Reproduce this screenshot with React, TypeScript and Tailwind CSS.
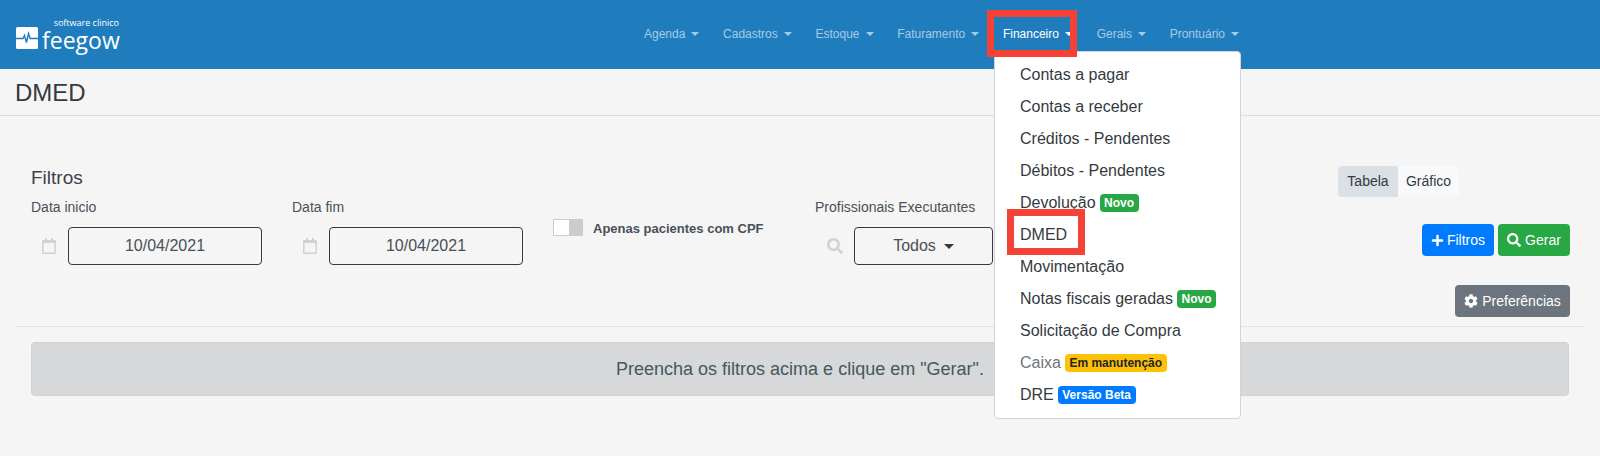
import { FaCog, FaPlus, FaRegCalendar, FaSearch } from "react-icons/fa";

const navItems = ["Agenda", "Cadastros", "Estoque", "Faturamento", "Financeiro", "Gerais", "Prontuário"];

const Caret = ({ className }: { className: string }) => (
  <span className={`inline-block border-x-transparent ${className}`} />
);

const Logo = () => (
  <div className="flex items-end">
    <svg width="22" height="22" viewBox="0 0 22 22" className="mb-[4px]">
      <rect x="0" y="0" width="22" height="22" rx="1.5" fill="#fff" />
      <path d="M0 11.5h7l1.5-3 2 7 2-9 1.6 5H22" fill="none" stroke="#1f7dbd" strokeWidth="1.4" />
    </svg>
    <div className="ml-[4px] flex h-[36px] w-[79px] flex-col items-end font-['Open_Sans',sans-serif] text-white">
      <span className="pr-[2px] text-[9px] leading-[11px]">software clinico</span>
      <span className="w-full text-[23px] leading-[24px]">feegow</span>
    </div>
  </div>
);

const Badge = ({ color, children }: { color: string; children: string }) => (
  <span className={`ml-[4px] shrink-0 rounded-[4px] px-[4.5px] text-[12px] leading-[18px] font-bold ${color}`}>{children}</span>
);

const DateField = ({ label, width }: { label: string; width: string }) => (
  <div className={width}>
    <label className="block h-[21px] text-[14px] leading-[21px] text-[#495057]">{label}</label>
    <div className="mt-[9px] flex items-center">
      <FaRegCalendar className="ml-[10px] text-[16px] text-[#d0d2d2]" />
      <div className="ml-[11px] flex h-[38px] w-[194px] items-center justify-center rounded-[4px] border border-[#343a40] text-[16px] text-[#495057]">
        10/04/2021
      </div>
    </div>
  </div>
);

export default function App() {
  return (
    <div className="relative h-[456px] w-full overflow-hidden bg-[#f5f5f5] font-['Liberation_Sans',Arial,sans-serif] text-[#343a40]">
      <header className="flex h-[69px] items-center bg-[#207dbd] pl-[16px]">
        <Logo />
        <nav className="mb-[2px] ml-[523px] flex items-center gap-[23.7px] text-[12px] text-[#a6cbe6]">
          {navItems.map((item) => (
            <span key={item} className={`flex items-center gap-[6px] ${item === "Financeiro" ? "text-white" : ""}`}>
              {item}
              <Caret className={`border-x-[4px] border-t-[4px] ${item === "Financeiro" ? "border-t-white" : "border-t-[#a6cbe6]"}`} />
            </span>
          ))}
        </nav>
      </header>

      <div className="flex h-[47px] items-center border-b border-[#dcdcdc] pl-[15px] pt-[2px] text-[24px] text-[#343a40]">DMED</div>

      <main className="px-[15px]">
        <section className="flex h-[211px] justify-between border-b border-[#e4e4e4] pl-[16px] pr-[15px] pt-[48px]">
          <div>
            <h2 className="text-[19px] leading-[28px] text-[#3d4349]">Filtros</h2>
            <div className="mt-[5px] flex">
              <DateField label="Data inicio" width="w-[261px]" />
              <DateField label="Data fim" width="w-[261px]" />
              <div className="mt-[22px] flex h-[18px] w-[262px] items-start">
                <span className="flex h-[17px] w-[30px] bg-[#cccccc] p-[1px]">
                  <span className="h-full w-[15px] bg-white" />
                </span>
                <span className="ml-[10px] mt-[1px] text-[13px] leading-[18px] font-bold text-[#495057]">Apenas pacientes com CPF</span>
              </div>
              <div>
                <label className="block h-[21px] text-[14px] leading-[21px] text-[#495057]">Profissionais Executantes</label>
                <div className="mt-[9px] flex items-center">
                  <FaSearch className="ml-[12px] text-[16px] text-[#d0d2d2]" />
                  <div className="ml-[11px] flex h-[38px] w-[139px] items-center justify-center gap-[8px] rounded-[4px] border border-[#343a40] text-[16px] text-[#495057]">
                    Todos
                    <Caret className="border-x-[5px] border-t-[5px] border-t-[#343a40]" />
                  </div>
                </div>
              </div>
            </div>
          </div>

          <div className="mt-[2px] flex w-[232px] flex-col">
            <div className="flex h-[31px] text-[14px]">
              <span className="flex w-[60px] items-center justify-center rounded-l-[4px] bg-[#dae0e5]">Tabela</span>
              <span className="flex w-[61px] items-center justify-center rounded-r-[4px] bg-[#f8f9fa]">Gráfico</span>
            </div>
            <div className="mt-[27px] flex justify-end gap-[4px] text-[14px] text-white">
              <span className="flex h-[32px] w-[72px] items-center justify-center gap-[3px] rounded-[4px] bg-[#007bff]">
                <FaPlus className="text-[13px]" />
                Filtros
              </span>
              <span className="flex h-[32px] w-[72px] items-center justify-center gap-[4px] rounded-[4px] bg-[#28a745]">
                <FaSearch className="text-[14px]" />
                Gerar
              </span>
            </div>
            <div className="mt-[29px] flex justify-end">
              <span className="flex h-[32px] w-[115px] items-center justify-center gap-[4px] rounded-[4px] bg-[#6c757d] text-[14px] text-white">
                <FaCog className="text-[14px]" />
                Preferências
              </span>
            </div>
          </div>
        </section>

        <div className="mx-[16px] mt-[15px] flex h-[54px] items-center justify-center rounded-[4px] border border-[#d0d2d3] bg-[#d6d8d9] text-[18px] text-[#44595b]">
          Preencha os filtros acima e clique em "Gerar".
        </div>
      </main>

      <div className="absolute left-[994px] top-[51px] w-[247px] rounded-[4px] border border-[#d4d4d4] bg-white py-[7px] text-[16px] text-[#343a40]">
        {[
          ["Contas a pagar"],
          ["Contas a receber"],
          ["Créditos - Pendentes"],
          ["Débitos - Pendentes"],
          ["Devolução", "Novo", "bg-[#28a745] text-white"],
          ["DMED"],
          ["Movimentação"],
          ["Notas fiscais geradas", "Novo", "bg-[#28a745] text-white"],
          ["Solicitação de Compra"],
          ["Caixa", "Em manutenção", "bg-[#ffc107] text-[#212529]"],
          ["DRE", "Versão Beta", "bg-[#007bff] text-white"],
        ].map(([label, badge, color]) => (
          <div key={label} className={`flex h-[32px] items-center whitespace-nowrap pl-[25px] ${label === "Caixa" ? "text-[#6c757d]" : ""}`}>
            {label}
            {badge && <Badge color={color}>{badge}</Badge>}
          </div>
        ))}
      </div>

      <div className="absolute left-[987px] top-[10px] h-[47px] w-[90px] border-[7px] border-[#f44336]" />
      <div className="absolute left-[1007px] top-[209px] h-[46px] w-[78px] border-[7px] border-[#f44336]" />
    </div>
  );
}
